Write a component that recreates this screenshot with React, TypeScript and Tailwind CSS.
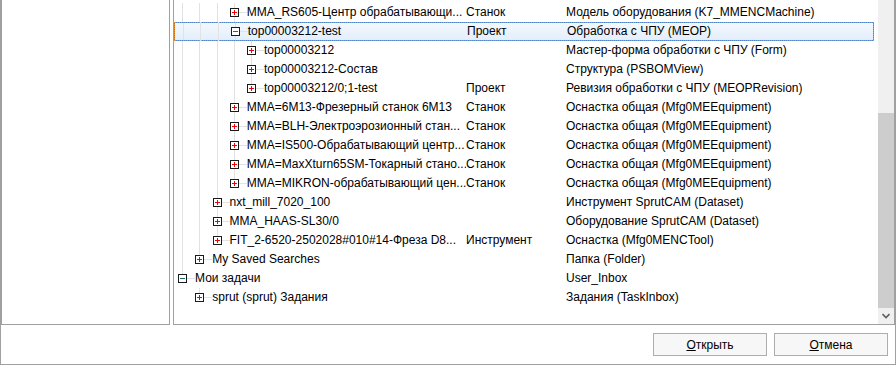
import React from 'react';

type Row = {
  level: number;
  open?: boolean;
  name: string;
  type?: string;
  desc: string;
  selected?: boolean;
};

const rows: Row[] = [
  { level: 3, name: 'MMA_RS605-Центр обрабатывающи...', type: 'Станок', desc: 'Модель оборудования (K7_MMENCMachine)' },
  { level: 3, open: true, name: 'top00003212-test', type: 'Проект', desc: 'Обработка с ЧПУ (MEOP)', selected: true },
  { level: 4, name: 'top00003212', desc: 'Мастер-форма обработки с ЧПУ (Form)' },
  { level: 4, name: 'top00003212-Состав', desc: 'Структура (PSBOMView)' },
  { level: 4, name: 'top00003212/0;1-test', type: 'Проект', desc: 'Ревизия обработки с ЧПУ (MEOPRevision)' },
  { level: 3, name: 'MMA=6M13-Фрезерный станок 6М13', type: 'Станок', desc: 'Оснастка общая (Mfg0MEEquipment)' },
  { level: 3, name: 'MMA=BLH-Электроэрозионный стан...', type: 'Станок', desc: 'Оснастка общая (Mfg0MEEquipment)' },
  { level: 3, name: 'MMA=IS500-Обрабатывающий центр...', type: 'Станок', desc: 'Оснастка общая (Mfg0MEEquipment)' },
  { level: 3, name: 'MMA=MaxXturn65SM-Токарный стано...', type: 'Станок', desc: 'Оснастка общая (Mfg0MEEquipment)' },
  { level: 3, name: 'MMA=MIKRON-обрабатывающий цен...', type: 'Станок', desc: 'Оснастка общая (Mfg0MEEquipment)' },
  { level: 2, name: 'nxt_mill_7020_100', desc: 'Инструмент SprutCAM (Dataset)' },
  { level: 2, name: 'MMA_HAAS-SL30/0', desc: 'Оборудование SprutCAM (Dataset)' },
  { level: 2, name: 'FIT_2-6520-2502028#010#14-Фреза D8...', type: 'Инструмент', desc: 'Оснастка (Mfg0MENCTool)' },
  { level: 1, name: 'My Saved Searches', desc: 'Папка (Folder)' },
  { level: 0, open: true, name: 'Мои задачи', desc: 'User_Inbox' },
  { level: 1, name: 'sprut (sprut) Задания', desc: 'Задания (TaskInbox)' },
];

// is there a later sibling at column k before the branch closes
const continues = (i: number, k: number) => {
  for (let j = i + 1; j < rows.length; j++) {
    if (rows[j].level === k) return true;
    if (rows[j].level < k) return false;
  }
  return false;
};

const LINE = '#e2e2e2';

function Indent({ line }: { line: boolean }) {
  return (
    <svg width="17.25" height="19" className="shrink-0 block">
      {line && <line x1="8.5" y1="0" x2="8.5" y2="19" stroke={LINE} />}
    </svg>
  );
}

function Expander({ open, down }: { open?: boolean; down: boolean }) {
  return (
    <svg width="21" height="19" className="shrink-0 block">
      <line x1="8.5" y1="0" x2="8.5" y2={down ? 19 : 9.5} stroke={LINE} />
      <line x1="13" y1="9.5" x2="21" y2="9.5" stroke={LINE} />
      <rect x="4.5" y="5.5" width="8" height="8" fill="#fff" stroke="#1a1a1a" />
      <line x1="6" y1="9.5" x2="11" y2="9.5" stroke={open ? '#1f6b6b' : '#f00000'} />
      {!open && <line x1="8.5" y1="7" x2="8.5" y2="12" stroke="#f00000" />}
    </svg>
  );
}

function TreeRow({ row, i }: { row: Row; i: number }) {
  const cols = [];
  for (let k = 0; k < row.level; k++) cols.push(<Indent key={k} line={continues(i, k)} />);
  return (
    <div
      className={
        'flex h-[19px] items-center leading-[19px] mr-[4px] ' +
        (row.selected
          ? 'bg-gradient-to-b from-[#f3f8fe] to-[#e4eefa] border border-[#4f86c9] outline-1 outline-dotted outline-[#e3922f] -outline-offset-1'
          : '')
      }
    >
      <div className="flex w-[292px] shrink-0 items-center overflow-hidden whitespace-nowrap">
        {cols}
        <Expander open={row.open} down={continues(i, row.level)} />
        <span>{row.name}</span>
      </div>
      <div className="w-[100px] shrink-0 whitespace-nowrap">{row.type}</div>
      <div className="whitespace-nowrap">{row.desc}</div>
    </div>
  );
}

export default function App() {
  return (
    <div className="w-[896px] h-[365px] flex flex-col bg-white border-l border-r border-b border-[#a0a0a0] font-['Liberation_Sans',Arial,sans-serif] text-[12px] text-black overflow-hidden">
      <div className="flex h-[325px] shrink-0">
        <div className="w-[169px] shrink-0 border-l border-r border-b border-[#a0a0a0] bg-white" />
        <div className="ml-[3px] flex-1 flex border-l border-r border-b border-[#a0a0a0] bg-white">
          <div className="flex-1 pt-[3px]">
            {rows.map((r, i) => (
              <TreeRow key={i} row={r} i={i} />
            ))}
          </div>
          <div className="w-[16px] flex flex-col bg-[#f0f0f0]">
            <div className="h-[113px]" />
            <div className="h-[195px] bg-[#cdcdcd]" />
            <div className="flex-1 flex items-center justify-center">
              <svg width="8" height="6" viewBox="0 0 8 6">
                <path d="M0.5 1 L4 4.5 L7.5 1" fill="none" stroke="#606060" strokeWidth="1.6" />
              </svg>
            </div>
          </div>
        </div>
      </div>
      <div className="flex-1 flex justify-end items-start pt-[8px] pr-[7px] gap-[7px]">
        <button className="w-[114px] h-[23px] border border-[#adadad] bg-[#f7f7f7] text-black text-[12px]">
          <span className="underline">О</span>ткрыть
        </button>
        <button className="w-[114px] h-[23px] border border-[#adadad] bg-[#f7f7f7] text-black text-[12px]">
          <span className="underline">О</span>тмена
        </button>
      </div>
    </div>
  );
}
